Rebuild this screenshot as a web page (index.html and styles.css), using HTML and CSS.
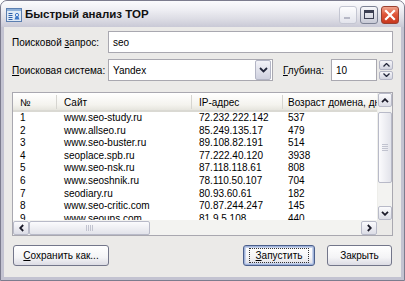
FILE: index.html
```html
<!DOCTYPE html>
<html lang="ru">
<head>
<meta charset="utf-8">
<title>Быстрый анализ TOP</title>
<link rel="stylesheet" href="styles.css">
</head>
<body>
<div class="window">
  <div class="titlebar">
    <svg class="app-icon" width="16" height="16" viewBox="0 0 16 16">
      <rect x="0.5" y="1.5" width="15" height="13" fill="#dfeaf6" stroke="#5c7fb0"/>
      <rect x="1" y="2" width="14" height="2" fill="#8fb0d8"/>
      <line x1="2.5" y1="6.5" x2="6.5" y2="6.5" stroke="#2d5fa8"/>
      <line x1="2.5" y1="8.5" x2="6.5" y2="8.5" stroke="#2d5fa8"/>
      <line x1="2.5" y1="10.5" x2="6.5" y2="10.5" stroke="#2d5fa8"/>
      <line x1="2.5" y1="12.5" x2="6.5" y2="12.5" stroke="#2d5fa8"/>
      <path d="M8.5 12.5 L11 6 L13.5 12.5 Z" fill="#3f78c8"/>
      <circle cx="11" cy="8" r="1.6" fill="#f2f6fb" stroke="#3f78c8"/>
    </svg>
    <span class="title">Быстрый анализ TOP</span>
    <div class="caption-buttons">
      <span class="cbtn cmin"><i></i></span>
      <span class="cbtn cmax"><i></i></span>
      <span class="cbtn cclose">
        <svg width="12" height="12" viewBox="0 0 12 12"><path d="M2 2 L10 10 M10 2 L2 10" stroke="#fff" stroke-width="2.2" stroke-linecap="square"/></svg>
      </span>
    </div>
  </div>
  <div class="client">
    <div class="row">
      <span class="label">Поисковой <u>з</u>апрос:</span>
      <div class="textbox query">seo</div>
    </div>
    <div class="row row2">
      <span class="label"><u>П</u>оисковая система:</span>
      <div class="textbox combo">
        <span class="combo-text">Yandex</span>
        <span class="drop">
          <svg width="9" height="6" viewBox="0 0 9 6"><path d="M1 1 L4.5 4.5 L8 1" fill="none" stroke="#22263a" stroke-width="1.8"/></svg>
        </span>
      </div>
      <span class="label2"><u>Г</u>лубина:</span>
      <div class="textbox depth">10</div>
      <div class="spin">
        <span class="spin-btn"><svg width="7" height="4" viewBox="0 0 7 4"><path d="M0.5 3.5 L3.5 0.5 L6.5 3.5" fill="none" stroke="#22263a" stroke-width="1.3"/></svg></span>
        <span class="spin-btn"><svg width="7" height="4" viewBox="0 0 7 4"><path d="M0.5 0.5 L3.5 3.5 L6.5 0.5" fill="none" stroke="#22263a" stroke-width="1.3"/></svg></span>
      </div>
    </div>
    <div class="listview">
      <div class="lv-main">
        <div class="lv-header">
          <span class="hcell c1">№</span>
          <span class="hcell c2">Сайт</span>
          <span class="hcell c3">IP-адрес</span>
          <span class="hcell c4">Возраст домена, дней</span>
        </div>
        <div class="lv-body">
          <div class="lv-row"><span class="c1">1</span><span class="c2">www.seo-study.ru</span><span class="c3">72.232.222.142</span><span class="c4">537</span></div>
          <div class="lv-row"><span class="c1">2</span><span class="c2">www.allseo.ru</span><span class="c3">85.249.135.17</span><span class="c4">479</span></div>
          <div class="lv-row"><span class="c1">3</span><span class="c2">www.seo-buster.ru</span><span class="c3">89.108.82.191</span><span class="c4">514</span></div>
          <div class="lv-row"><span class="c1">4</span><span class="c2">seoplace.spb.ru</span><span class="c3">77.222.40.120</span><span class="c4">3938</span></div>
          <div class="lv-row"><span class="c1">5</span><span class="c2">www.seo-nsk.ru</span><span class="c3">87.118.118.61</span><span class="c4">808</span></div>
          <div class="lv-row"><span class="c1">6</span><span class="c2">www.seoshnik.ru</span><span class="c3">78.110.50.107</span><span class="c4">704</span></div>
          <div class="lv-row"><span class="c1">7</span><span class="c2">seodiary.ru</span><span class="c3">80.93.60.61</span><span class="c4">182</span></div>
          <div class="lv-row"><span class="c1">8</span><span class="c2">www.seo-critic.com</span><span class="c3">70.87.244.247</span><span class="c4">145</span></div>
          <div class="lv-row"><span class="c1">9</span><span class="c2">www.seoups.com</span><span class="c3">81.9.5.108</span><span class="c4">440</span></div>
        </div>
      </div>
      <div class="vscroll">
        <span class="sb-btn"><svg width="8" height="5" viewBox="0 0 8 5"><path d="M1 4.2 L4 1.2 L7 4.2" fill="none" stroke="#1c1c2a" stroke-width="1.8"/></svg></span>
        <span class="v-track-a"></span>
        <span class="v-thumb"><i></i></span>
        <span class="v-track-b"></span>
        <span class="sb-btn"><svg width="8" height="5" viewBox="0 0 8 5"><path d="M1 0.8 L4 3.8 L7 0.8" fill="none" stroke="#1c1c2a" stroke-width="1.8"/></svg></span>
      </div>
      <div class="hscroll">
        <span class="sb-btn hb"><svg width="5" height="8" viewBox="0 0 5 8"><path d="M4.2 1 L1.2 4 L4.2 7" fill="none" stroke="#1c1c2a" stroke-width="1.8"/></svg></span>
        <span class="h-thumb"><i></i></span>
        <span class="h-track"></span>
        <span class="sb-btn hb"><svg width="5" height="8" viewBox="0 0 5 8"><path d="M0.8 1 L3.8 4 L0.8 7" fill="none" stroke="#1c1c2a" stroke-width="1.8"/></svg></span>
      </div>
      <div class="corner"></div>
    </div>
    <div class="buttons">
      <button class="btn save"><u>С</u>охранить как...</button>
      <span class="spacer"></span>
      <button class="btn run"><span class="focus"><u>З</u>апустить</span></button>
      <button class="btn close-btn">Закрыть</button>
    </div>
  </div>
</div>
</body>
</html>
```

FILE: styles.css
```css
* { box-sizing: border-box; }

html, body {
  margin: 0;
  padding: 0;
  background: #ffffff;
}

body {
  font-family: "Liberation Sans", Arial, sans-serif;
  font-size: 10px;
  color: #000;
}

.window {
  width: 405px;
  height: 281px;
  background: #c3c3d1;
  border: 1px solid #7c7c8e;
  border-radius: 7px 7px 0 0;
  display: flex;
  flex-direction: column;
  overflow: hidden;
}

.titlebar {
  height: 26px;
  flex: none;
  display: flex;
  align-items: center;
  padding: 0 5px 0 5px;
  background: linear-gradient(#fbfbfd 0%, #eeeef3 35%, #dcdce4 70%, #c9c9d6 100%);
}

.app-icon {
  flex: none;
  margin-top: 1px;
}

.title {
  margin-left: 3px;
  font-size: 11.5px;
  font-weight: bold;
  color: #111;
  flex: 1;
}

.caption-buttons {
  display: flex;
  gap: 3px;
  margin-top: 1px;
}

.cbtn {
  width: 18px;
  height: 18px;
  border-radius: 3px;
  display: flex;
  align-items: center;
  justify-content: center;
  position: relative;
}

.cmin {
  border: 1px solid #c4c6d2;
  background: linear-gradient(#fdfdfe, #e3e4ec);
}

.cmin i {
  position: absolute;
  left: 4px;
  bottom: 4px;
  width: 6px;
  height: 2px;
  background: #b6b8c6;
}

.cmax {
  border: 1px solid #7d8294;
  background: linear-gradient(#f7f7fa, #c8cad6);
}

.cmax i {
  width: 10px;
  height: 9px;
  border: 1px solid #3c3f52;
  border-top-width: 3px;
}

.cclose {
  border: 1px solid #9a4030;
  background: linear-gradient(#f0a68f, #e0573a 45%, #c8371d);
}

.client {
  flex: 1;
  margin: 0 3px 3px;
  background: #ebeae8;
  padding: 4px 8px 0 8px;
  display: flex;
  flex-direction: column;
}

.row {
  display: flex;
  align-items: center;
  height: 22px;
  flex: none;
}

.row2 {
  margin-top: 6px;
}

.label {
  width: 96px;
  flex: none;
  font-size: 10px;
}

.textbox {
  height: 22px;
  border: 1px solid #a9a8b0;
  background: #fff;
  padding-left: 4px;
  display: flex;
  align-items: center;
}

.query {
  flex: 1;
}

.combo {
  width: 165px;
  flex: none;
  padding-right: 1px;
}

.combo-text {
  flex: 1;
}

.drop {
  width: 16px;
  height: 20px;
  border: 1px solid #b3b5c5;
  border-radius: 2px;
  background: linear-gradient(#f3f3f8, #cfd1df);
  display: flex;
  align-items: center;
  justify-content: center;
}

.label2 {
  margin-left: 10px;
  width: 48px;
  flex: none;
}

.depth {
  width: 46px;
  flex: none;
}

.spin {
  width: 14px;
  height: 22px;
  margin-left: 2px;
  display: flex;
  flex-direction: column;
  gap: 1px;
  padding: 1px 0;
}

.spin-btn {
  flex: 1;
  border: 1px solid #b3b5c5;
  border-radius: 2px;
  background: linear-gradient(#f6f6fa, #d2d4e0);
  display: flex;
  align-items: center;
  justify-content: center;
}

.listview {
  margin-top: 11px;
  height: 144px;
  flex: none;
  border: 1px solid #a9a8b0;
  background: #fff;
  display: grid;
  grid-template-columns: 1fr 15px;
  grid-template-rows: 1fr 15px;
  overflow: hidden;
}

.lv-main {
  overflow: hidden;
  min-width: 0;
}

.lv-header {
  display: grid;
  grid-template-columns: 44px 135px 91px 150px;
  height: 19px;
  background: linear-gradient(#ffffff, #f4f3ee 70%, #e6e5de);
  border-bottom: 2px solid #dad9d3;
  white-space: nowrap;
}

.hcell {
  display: flex;
  align-items: center;
  border-right: 1px solid #d6d5d0;
  margin: 2px 0 1px;
  overflow: hidden;
}

.lv-header .c4 {
  border-right: none;
}

.c1 { padding-left: 7px; }
.c2 { padding-left: 7px; }
.c3 { padding-left: 7px; }
.c4 { padding-left: 5px; }

.lv-row {
  display: grid;
  grid-template-columns: 44px 135px 91px 150px;
  height: 12.6px;
  line-height: 12.6px;
  white-space: nowrap;
}

.vscroll {
  grid-row: 1;
  grid-column: 2;
  display: flex;
  flex-direction: column;
  background: #f3f3f1;
  border-left: 1px solid #eeeeea;
}

.sb-btn {
  height: 14px;
  flex: none;
  border: 1px solid #b8bac8;
  border-radius: 2px;
  background: linear-gradient(#fbfbfd, #dcdde6);
  display: flex;
  align-items: center;
  justify-content: center;
}

.v-track-a {
  height: 5px;
  flex: none;
}

.v-thumb {
  height: 71px;
  flex: none;
  border: 1px solid #b8bac8;
  border-radius: 2px;
  background: linear-gradient(90deg, #fbfbfd, #e2e3ea);
  display: flex;
  align-items: center;
  justify-content: center;
}

.v-thumb i {
  width: 6px;
  height: 7px;
  background: repeating-linear-gradient(#c1c3cf 0 1px, transparent 1px 2px);
}

.v-track-b {
  flex: 1;
}

.hscroll {
  grid-row: 2;
  grid-column: 1;
  display: flex;
  align-items: center;
  background: #f3f3f1;
}

.hb {
  width: 16px;
  height: 14px;
}

.h-thumb {
  width: 121px;
  height: 14px;
  flex: none;
  border: 1px solid #b8bac8;
  border-radius: 2px;
  background: linear-gradient(#fbfbfd, #e2e3ea);
  display: flex;
  align-items: center;
  justify-content: center;
}

.h-thumb i {
  width: 7px;
  height: 6px;
  background: repeating-linear-gradient(90deg, #c1c3cf 0 1px, transparent 1px 2px);
}

.h-track {
  flex: 1;
}

.corner {
  grid-row: 2;
  grid-column: 2;
  background: #ebeae8;
}

.buttons {
  margin-top: 9px;
  display: flex;
  align-items: center;
  padding: 0 1px;
  gap: 12px;
}

.spacer {
  flex: 1;
}

.btn {
  height: 21px;
  font-family: inherit;
  font-size: 10px;
  color: #000;
  border: 1px solid #73768a;
  border-radius: 3px;
  background: linear-gradient(#ffffff, #f4f4f6 60%, #dcdce4);
  padding: 0;
  display: flex;
  align-items: center;
  justify-content: center;
}

.save {
  width: 96px;
}

.run {
  width: 72px;
  box-shadow: inset 0 0 0 1px #9fb2d8, inset 0 0 0 2px #c7d3ec;
  border-color: #4b5f8c;
}

.run .focus {
  border: 1px dotted #333;
  padding: 1px 6px;
  line-height: 11px;
}

.close-btn {
  width: 65px;
}

u {
  text-decoration: underline;
  text-underline-offset: 1px;
}
```
